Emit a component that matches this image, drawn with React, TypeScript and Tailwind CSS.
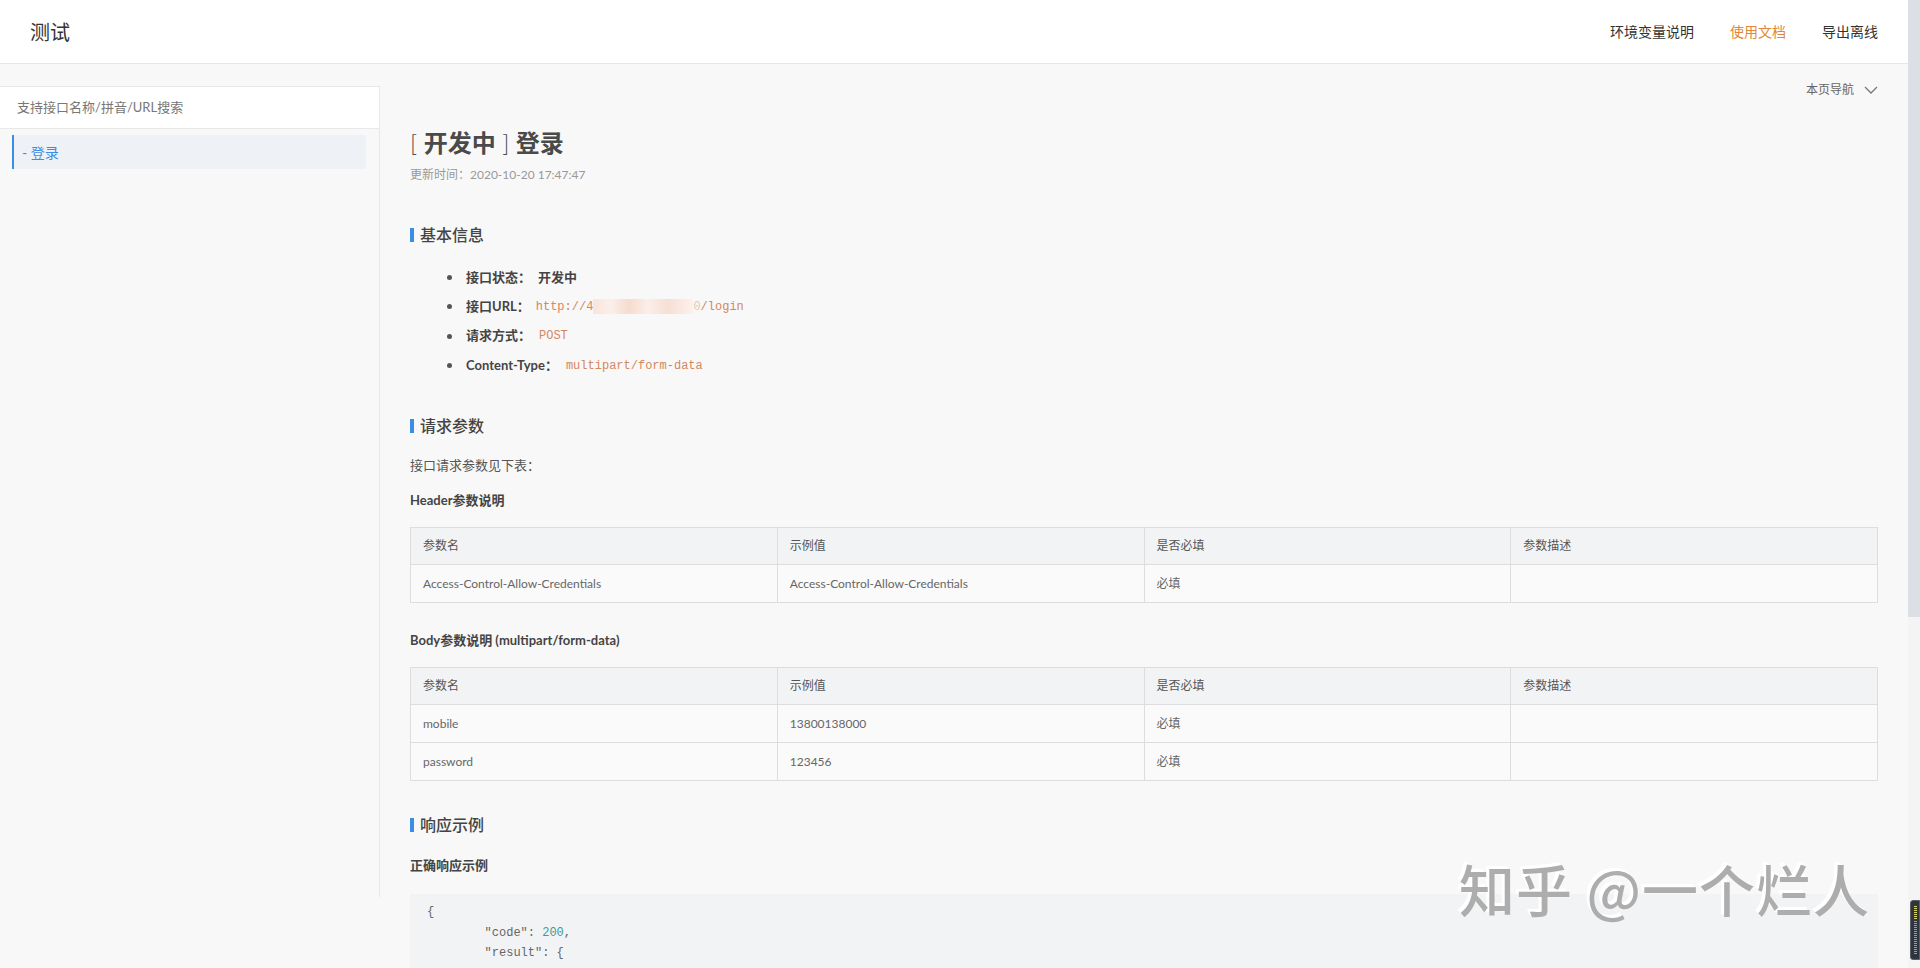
import React from 'react';

const headerRows = [
    { name: 'Access-Control-Allow-Credentials', example: 'Access-Control-Allow-Credentials', required: '必填', desc: '' },
];

const bodyRows = [
    { name: 'mobile', example: '13800138000', required: '必填', desc: '' },
    { name: 'password', example: '123456', required: '必填', desc: '' },
];

type Row = { name: string; example: string; required: string; desc: string };

const SectionTitle: React.FC<{ children: React.ReactNode; className?: string }> = ({ children, className }) => (
    <h2 className={`flex items-center gap-[6px] text-[16px] leading-[24px] font-medium text-[#444] ${className ?? ''}`}>
        <span className="h-[14px] w-[4px] bg-[#3a8ee6]" />
        {children}
    </h2>
);

const ParamTable: React.FC<{ rows: Row[]; className?: string }> = ({ rows, className }) => (
    <table className={`w-full table-fixed border-collapse border border-[#dddddd] text-[12px] ${className ?? ''}`}>
        <thead>
            <tr className="h-[37px] bg-[#f2f3f5] text-[#555]">
                <th className="border border-[#dddddd] pl-[12px] text-left font-normal">参数名</th>
                <th className="border border-[#dddddd] pl-[12px] text-left font-normal">示例值</th>
                <th className="border border-[#dddddd] pl-[12px] text-left font-normal">是否必填</th>
                <th className="border border-[#dddddd] pl-[12px] text-left font-normal">参数描述</th>
            </tr>
        </thead>
        <tbody>
            {rows.map(r => (
                <tr key={r.name} className="h-[38px] bg-[#fafafa] text-[#666]">
                    <td className="border border-[#dddddd] pl-[12px]">{r.name}</td>
                    <td className="border border-[#dddddd] pl-[12px]">{r.example}</td>
                    <td className="border border-[#dddddd] pl-[12px]">{r.required}</td>
                    <td className="border border-[#dddddd] pl-[12px]">{r.desc}</td>
                </tr>
            ))}
        </tbody>
    </table>
);

const Bullet: React.FC<{ children: React.ReactNode }> = ({ children }) => (
    <li className="flex h-[29.3px] items-center gap-[14px]">
        <span className="h-[5px] w-[5px] shrink-0 rounded-full bg-[#555]" />
        <span className="flex items-center">{children}</span>
    </li>
);

const Code: React.FC<{ children: React.ReactNode }> = ({ children }) => (
    <span className="ml-[8px] font-['Liberation_Mono',monospace] text-[12px] font-normal text-[#d4875e]">{children}</span>
);

export default function App() {
    return (
        <div className="relative flex h-[968px] w-full overflow-hidden bg-[#f8f8f8] font-['Lato','Noto_Sans_CJK_SC',sans-serif] text-[#444]">
            <div className="flex min-w-0 flex-1 flex-col">
                {/* top bar */}
                <header className="flex h-[64px] shrink-0 items-center justify-between border-b border-[#e6e6e6] bg-white pl-[30px] pr-[30px]">
                    <div className="text-[20px] text-[#333]">测试</div>
                    <nav className="flex items-center gap-[36px] text-[14px] text-[#333]">
                        <a>环境变量说明</a>
                        <a className="text-[#e0873a]">使用文档</a>
                        <a>导出离线</a>
                    </nav>
                </header>

                <div className="flex min-h-0 flex-1">
                    {/* sidebar */}
                    <aside className="mt-[22px] h-[811px] w-[380px] shrink-0 border-r border-[#e8e8e8]">
                        <div className="flex h-[43px] items-center border-y border-[#e8e8e8] bg-white pl-[17px] text-[13px] text-[#777]">
                            支持接口名称/拼音/URL搜索
                        </div>
                        <div className="ml-[12px] mr-[13px] mt-[6px] flex h-[34px] items-center border-l-2 border-[#3a8ee6] bg-[#eef1f5] pl-[8px] text-[14px] text-[#3a8ee6]">
                            - 登录
                        </div>
                    </aside>

                    {/* document */}
                    <main className="min-w-0 flex-1 px-[30px]">
                        <div className="mt-[18px] flex h-[16px] items-center justify-end gap-[10px] text-[12px] text-[#666]">
                            本页导航
                            <svg width="14" height="8" viewBox="0 0 14 8" fill="none" stroke="#777" strokeWidth="1.3">
                                <path d="M1 1l6 6 6-6" />
                            </svg>
                        </div>

                        <h1 className="mt-[29px] text-[24px] leading-[32px] text-[#4a4a4a]">
                            <span className="font-light">[ </span>
                            <span className="font-bold">开发中</span>
                            <span className="font-light"> ] </span>
                            <span className="font-bold">登录</span>
                        </h1>
                        <div className="mt-[7px] text-[12px] leading-[18px] text-[#999]">更新时间：2020-10-20 17:47:47</div>

                        <SectionTitle className="mt-[39px]">基本信息</SectionTitle>
                        <ul className="mt-[16px] pl-[37px] text-[13px] font-bold text-[#444]">
                            <Bullet>接口状态：<span className="ml-[7px]">开发中</span></Bullet>
                            <Bullet>
                                接口URL：
                                <span className="ml-[6px] flex items-center font-['Liberation_Mono',monospace] text-[12px] font-normal text-[#d4875e]">
                                    http://4
                                    <span className="inline-block h-[15px] w-[100px] bg-[linear-gradient(90deg,#f9e5dc,#fbefea_18%,#f6dbcf_36%,#fbeee8_55%,#f7dfd4_75%,#fcf1ec)]" />
                                    <span className="text-[#ecc7b4]">0</span>/login
                                </span>
                            </Bullet>
                            <Bullet>请求方式：<Code>POST</Code></Bullet>
                            <Bullet>Content-Type：<Code>multipart/form-data</Code></Bullet>
                        </ul>

                        <SectionTitle className="mt-[34px]">请求参数</SectionTitle>
                        <p className="mt-[17px] text-[13px] leading-[20px] text-[#555]">接口请求参数见下表：</p>
                        <h3 className="mt-[15px] text-[13px] leading-[20px] font-bold text-[#444]">Header参数说明</h3>
                        <ParamTable rows={headerRows} className="mt-[17px]" />

                        <h3 className="mt-[27px] text-[13px] leading-[20px] font-bold text-[#444]">Body参数说明 (multipart/form-data)</h3>
                        <ParamTable rows={bodyRows} className="mt-[17px]" />

                        <SectionTitle className="mt-[32px]">响应示例</SectionTitle>
                        <h3 className="mt-[18px] text-[13px] leading-[20px] font-bold text-[#444]">正确响应示例</h3>
                        <div className="mt-[19px] bg-[#f2f3f5] px-[17px] pb-[80px] pt-[8px] font-['Liberation_Mono',monospace] text-[12px] leading-[20.5px] text-[#666]">
                            <div>{'{'}</div>
                            <div className="pl-[57.6px]">"code": <span className="text-[#3f9a9a]">200</span>,</div>
                            <div className="pl-[57.6px]">"result": {'{'}</div>
                        </div>
                    </main>
                </div>
            </div>

            {/* page scrollbar */}
            <div className="flex w-[12px] shrink-0 flex-col bg-[#f4f4f4]">
                <div className="h-[617px] bg-[#dcdfe4]" />
            </div>

            {/* floating meter widget */}
            <div className="absolute right-0 top-[900px] flex h-[60px] w-[10px] flex-col items-center gap-[1px] rounded-l-[3px] border border-[#5a5f66] bg-[#2f353e] pt-[5px]">
                <div className="h-[14px] w-[3px] bg-[repeating-linear-gradient(180deg,#d9d36a_0_1px,transparent_1px_2px)]" />
                <div className="h-[34px] w-[3px] bg-[repeating-linear-gradient(180deg,#6fa6d6_0_1px,transparent_1px_2px)]" />
            </div>

            {/* watermark */}
            <div className="pointer-events-none absolute left-[1459px] top-[860px] whitespace-nowrap font-['Noto_Sans_CJK_SC',sans-serif] text-[56px] leading-[56px] font-medium tracking-[1px] text-[#adadad] [text-shadow:-3px_-3px_0_#ffffff]">
                知乎 @一个烂人
            </div>
        </div>
    );
}
